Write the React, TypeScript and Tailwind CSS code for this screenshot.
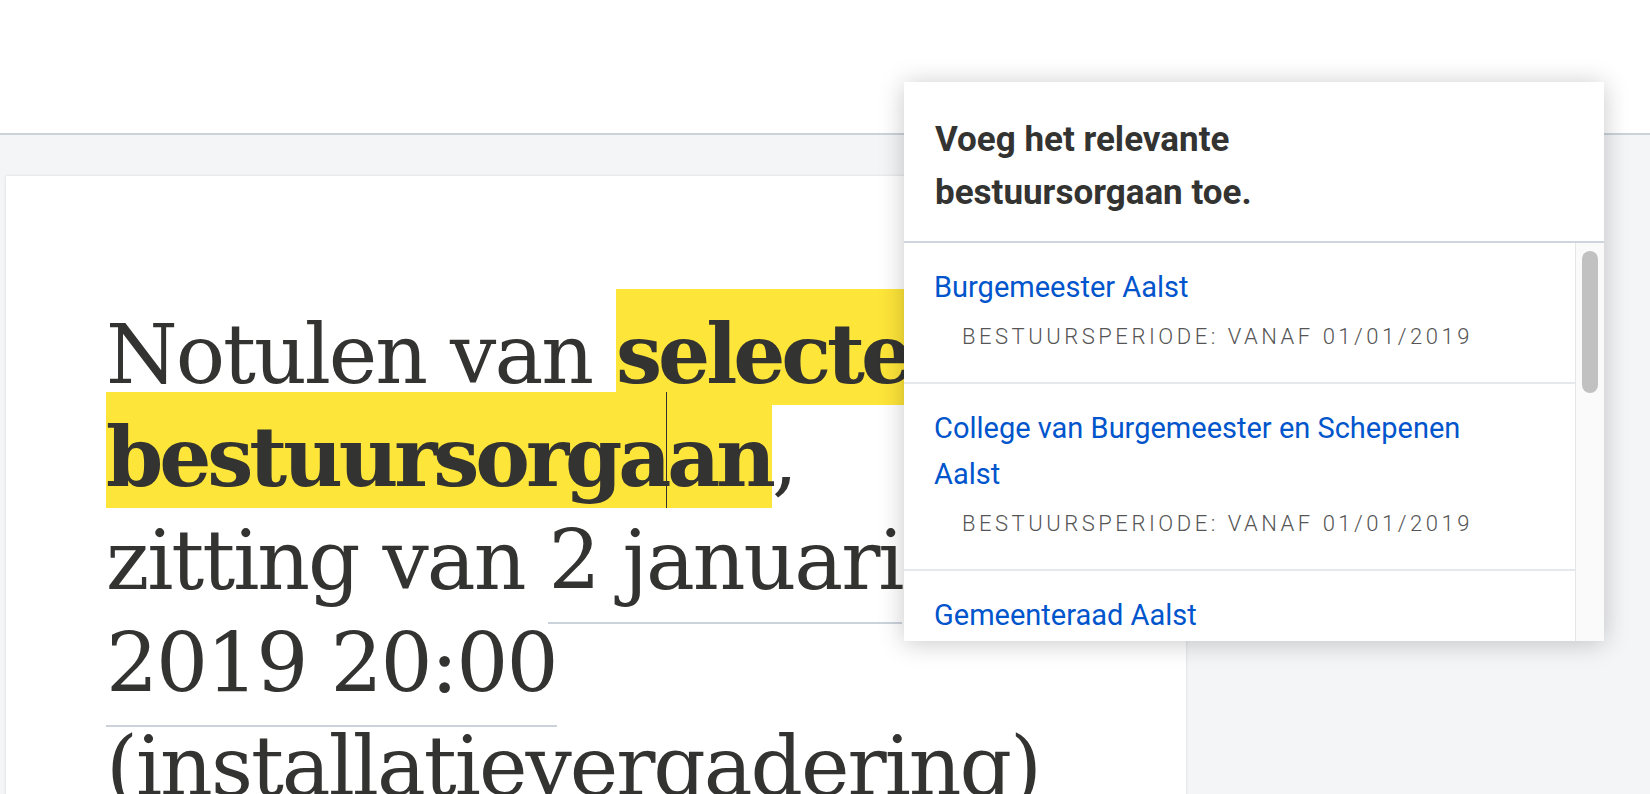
import React from 'react';

const items = [
  { name: 'Burgemeester Aalst', period: 'Bestuursperiode: vanaf 01/01/2019' },
  { name: 'College van Burgemeester en Schepenen Aalst', period: 'Bestuursperiode: vanaf 01/01/2019' },
  { name: 'Gemeenteraad Aalst', period: 'Bestuursperiode: vanaf 01/01/2019' },
];

const App: React.FC = () => {
  return (
    <div className="relative h-[794px] w-full overflow-hidden bg-[#f4f5f7]">
      {/* top bar */}
      <div className="h-[135px] border-b-2 border-[#cbd2da] bg-white" />

      {/* document */}
      <div className="pl-[6px] pt-[41px]">
        <div className="min-h-[720px] w-[1180px] bg-white px-[100px] pt-[127px] shadow-[0_0_3px_rgba(0,0,0,0.12)]">
          <h1
            className="max-w-[934px] text-[82px] leading-[103px] font-normal tracking-[-0.025em] text-[#333332]"
            style={{ fontFamily: '"DejaVu Serif", "Liberation Serif", serif' }}
          >
            Notulen van{' '}
            <span className="bg-[#fee539] pt-[17px] pb-[3px] font-bold tracking-[-0.05em]">
              selecteer bestuursorga
              <span className="-ml-px border-l-[1.5px] border-[#333332] pt-[17px] pb-[3px]" />
              an
            </span>
            , zitting van{' '}
            <span className="border-b-2 border-[#cbd2da] pb-[14px]">2 januari 2019 20:00 </span>
            (installatievergadering)
          </h1>
        </div>
      </div>

      {/* popover */}
      <div
        className="absolute left-[904px] top-[82px] flex h-[559px] w-[700px] flex-col overflow-hidden bg-white shadow-[0_2px_24px_rgba(0,0,0,0.22)]"
        style={{ fontFamily: 'Roboto, "Noto Sans", sans-serif' }}
      >
        <div className="border-b-2 border-[#cfd5dd] pt-[31px] pb-[22px] pl-[31px]">
          <p className="max-w-[520px] text-[35px] leading-[53px] font-bold text-[#333332]">
            Voeg het relevante bestuursorgaan toe.
          </p>
        </div>
        <div className="flex min-h-0 flex-1">
          <ul className="min-w-0 flex-1 overflow-hidden">
            {items.map((item) => (
              <li key={item.name} className="border-b-2 border-[#e6e9ec] pt-[21px] pr-[110px] pb-[29px] pl-[30px]">
                <div className="text-[29px] leading-[46px] text-[#0055cc]">{item.name}</div>
                <div className="mt-[11px] ml-[28px] whitespace-nowrap text-[22px] leading-[32px] font-light tracking-[0.16em] text-[#555555] uppercase">
                  {item.period}
                </div>
              </li>
            ))}
          </ul>
          <div className="w-[29px] border-l border-[#e6e6e6] bg-[#fafafa]">
            <div className="mt-[8px] ml-[6px] h-[142px] w-[16px] rounded-full bg-[#c1c1c1]" />
          </div>
        </div>
      </div>
    </div>
  );
};

export default App;
